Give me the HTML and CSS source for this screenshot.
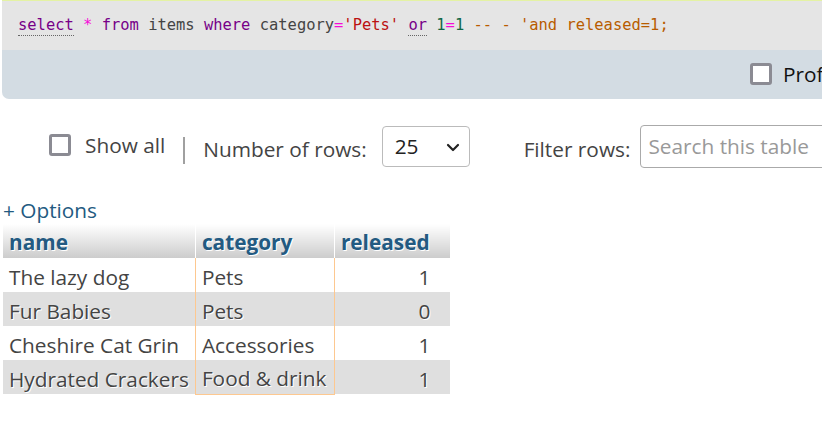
FILE: index.html
```html
<!DOCTYPE html>
<html>
<head>
<meta charset="utf-8">
<link rel="stylesheet" href="styles.css">
</head>
<body>
<div class="page">
  <div class="sqlbox">
    <code class="sql"><span class="kw doc">select</span> <span class="op">*</span> <span class="kw">from</span> <span class="var">items</span> <span class="kw">where</span> <span class="var">category</span><span class="op">=</span><span class="str">'Pets'</span> <span class="kw doc">or</span> <span class="num">1</span><span class="op">=</span><span class="num">1</span> <span class="cm">-- - 'and released=1;</span></code>
  </div>
  <div class="toolbar">
    <label class="check-label"><span class="checkbox"></span><span class="prof">Profiling</span></label>
  </div>

  <div class="navrow">
    <label class="showall"><span class="checkbox"></span><span>Show all</span></label>
    <span class="sep"></span>
    <span class="lbl">Number of rows:</span>
    <div class="select"><span>25</span>
      <svg class="chev" width="14" height="9" viewBox="0 0 14 9"><path d="M2 2 L7 7 L12 2" fill="none" stroke="#222" stroke-width="2.2" stroke-linecap="round" stroke-linejoin="round"/></svg>
    </div>
    <span class="lbl filter">Filter rows:</span>
    <div class="search">Search this table</div>
  </div>

  <a class="options">+ Options</a>

  <table class="data">
    <thead>
      <tr><th class="c1">name</th><th class="c2">category</th><th class="c3">released</th></tr>
    </thead>
    <tbody>
      <tr class="odd"><td>The lazy dog</td><td class="cond">Pets</td><td class="num">1</td></tr>
      <tr class="even"><td>Fur Babies</td><td class="cond">Pets</td><td class="num">0</td></tr>
      <tr class="odd"><td>Cheshire Cat Grin</td><td class="cond">Accessories</td><td class="num">1</td></tr>
      <tr class="even last"><td>Hydrated Crackers</td><td class="cond">Food &amp; drink</td><td class="num">1</td></tr>
    </tbody>
  </table>
</div>
</body>
</html>
```

FILE: styles.css
```css
html, body {
  margin: 0;
  padding: 0;
  background: #fff;
  overflow: hidden;
}
body {
  font-family: "Open Sans", "Noto Sans", sans-serif;
  color: #444;
}
.page {
  width: 1200px;
  padding-left: 2px;
}
.sqlbox {
  height: 49px;
  background: #e5e5e5;
  border-top: 1px solid #e4f2a4;
  box-sizing: content-box;
  padding-left: 16px;
}
.sql {
  display: block;
  font-family: "DejaVu Sans Mono", "Liberation Mono", monospace;
  font-size: 15.45px;
  line-height: 20px;
  padding-top: 14px;
  color: #333;
  white-space: pre;
}
.kw { color: #770088; }
.doc {
  border-bottom: 1px dotted #666;
  padding-bottom: 1px;
}
.op { color: #f60bd8; }
.var { color: #444; }
.str { color: #b11; }
.num { color: #116644; }
.cm { color: #b85c00; }

.toolbar {
  height: 49px;
  background: #d3dce3;
  border-bottom-left-radius: 7px;
  display: flex;
  align-items: center;
  padding-left: 748px;
}
.check-label {
  display: flex;
  align-items: center;
  gap: 11px;
  margin-top: -2px;
}
.checkbox {
  display: inline-block;
  width: 16px;
  height: 16px;
  border: 3px solid #8b8b93;
  border-radius: 3px;
  background: #fff;
  flex: none;
}
.prof {
  font-size: 20.8px;
  color: #111;
}

.navrow {
  display: flex;
  align-items: center;
  height: 44px;
  margin-top: 25px;
  padding-left: 47px;
  font-size: 20.8px;
}
.showall {
  display: flex;
  align-items: center;
  gap: 14px;
  margin-top: -3px;
}
.sep {
  display: inline-block;
  width: 2px;
  height: 27px;
  background: #a0a0a0;
  margin: 8px 18px 0 18px;
}
.lbl {
  margin-top: 6px;
}
.select {
  margin-left: 15px;
  width: 88px;
  height: 41px;
  border: 1px solid #bbb;
  border-radius: 4px;
  box-sizing: border-box;
  display: flex;
  align-items: center;
  justify-content: space-between;
  padding: 0 9px 0 12px;
  color: #222;
}
.chev { margin-top: 2px; }
.filter {
  margin-left: 54px;
}
.search {
  margin-left: 10px;
  width: 300px;
  height: 43px;
  border: 1px solid #aaa;
  border-radius: 4px;
  box-sizing: border-box;
  display: flex;
  align-items: center;
  padding-left: 7px;
  color: #999;
}

.options {
  display: block;
  margin-top: 28px;
  padding-left: 1px;
  font-size: 20.8px;
  line-height: 28px;
  color: #235a81;
}

table.data {
  border-collapse: collapse;
  margin-left: 1px;
  font-size: 20.8px;
  margin-top: 0;
}
table.data th {
  height: 34px;
  padding: 2px 6px 0 6px;
  text-align: left;
  font-weight: bold;
  color: #235a81;
  text-shadow: 1px 1px 0 #fff;
  background: linear-gradient(#ffffff, #cccccc);
  border-left: 1px solid #fff;
  box-sizing: border-box;
  line-height: 30px;
}
table.data th:first-child { border-left: none; }
table.data th.c1 { width: 191px; }
table.data th.c2 { width: 139px; }
table.data th.c3 { width: 116px; }
table.data td {
  height: 34px;
  padding: 3px 6px 0 6px;
  box-sizing: border-box;
  line-height: 30px;
  text-shadow: 1px 1px 0 #fff;
  white-space: nowrap;
}
table.data td.num {
  text-align: right;
  color: #444;
  padding-right: 20px;
}
table.data td.cond {
  border-left: 1px solid #fdc890;
  border-right: 1px solid #fdc890;
}
table.data tr.last td.cond {
  border-bottom: 1px solid #fdc890;
}
tr.odd td { background: #fff; }
tr.even td { background: #dfdfdf; }
```
